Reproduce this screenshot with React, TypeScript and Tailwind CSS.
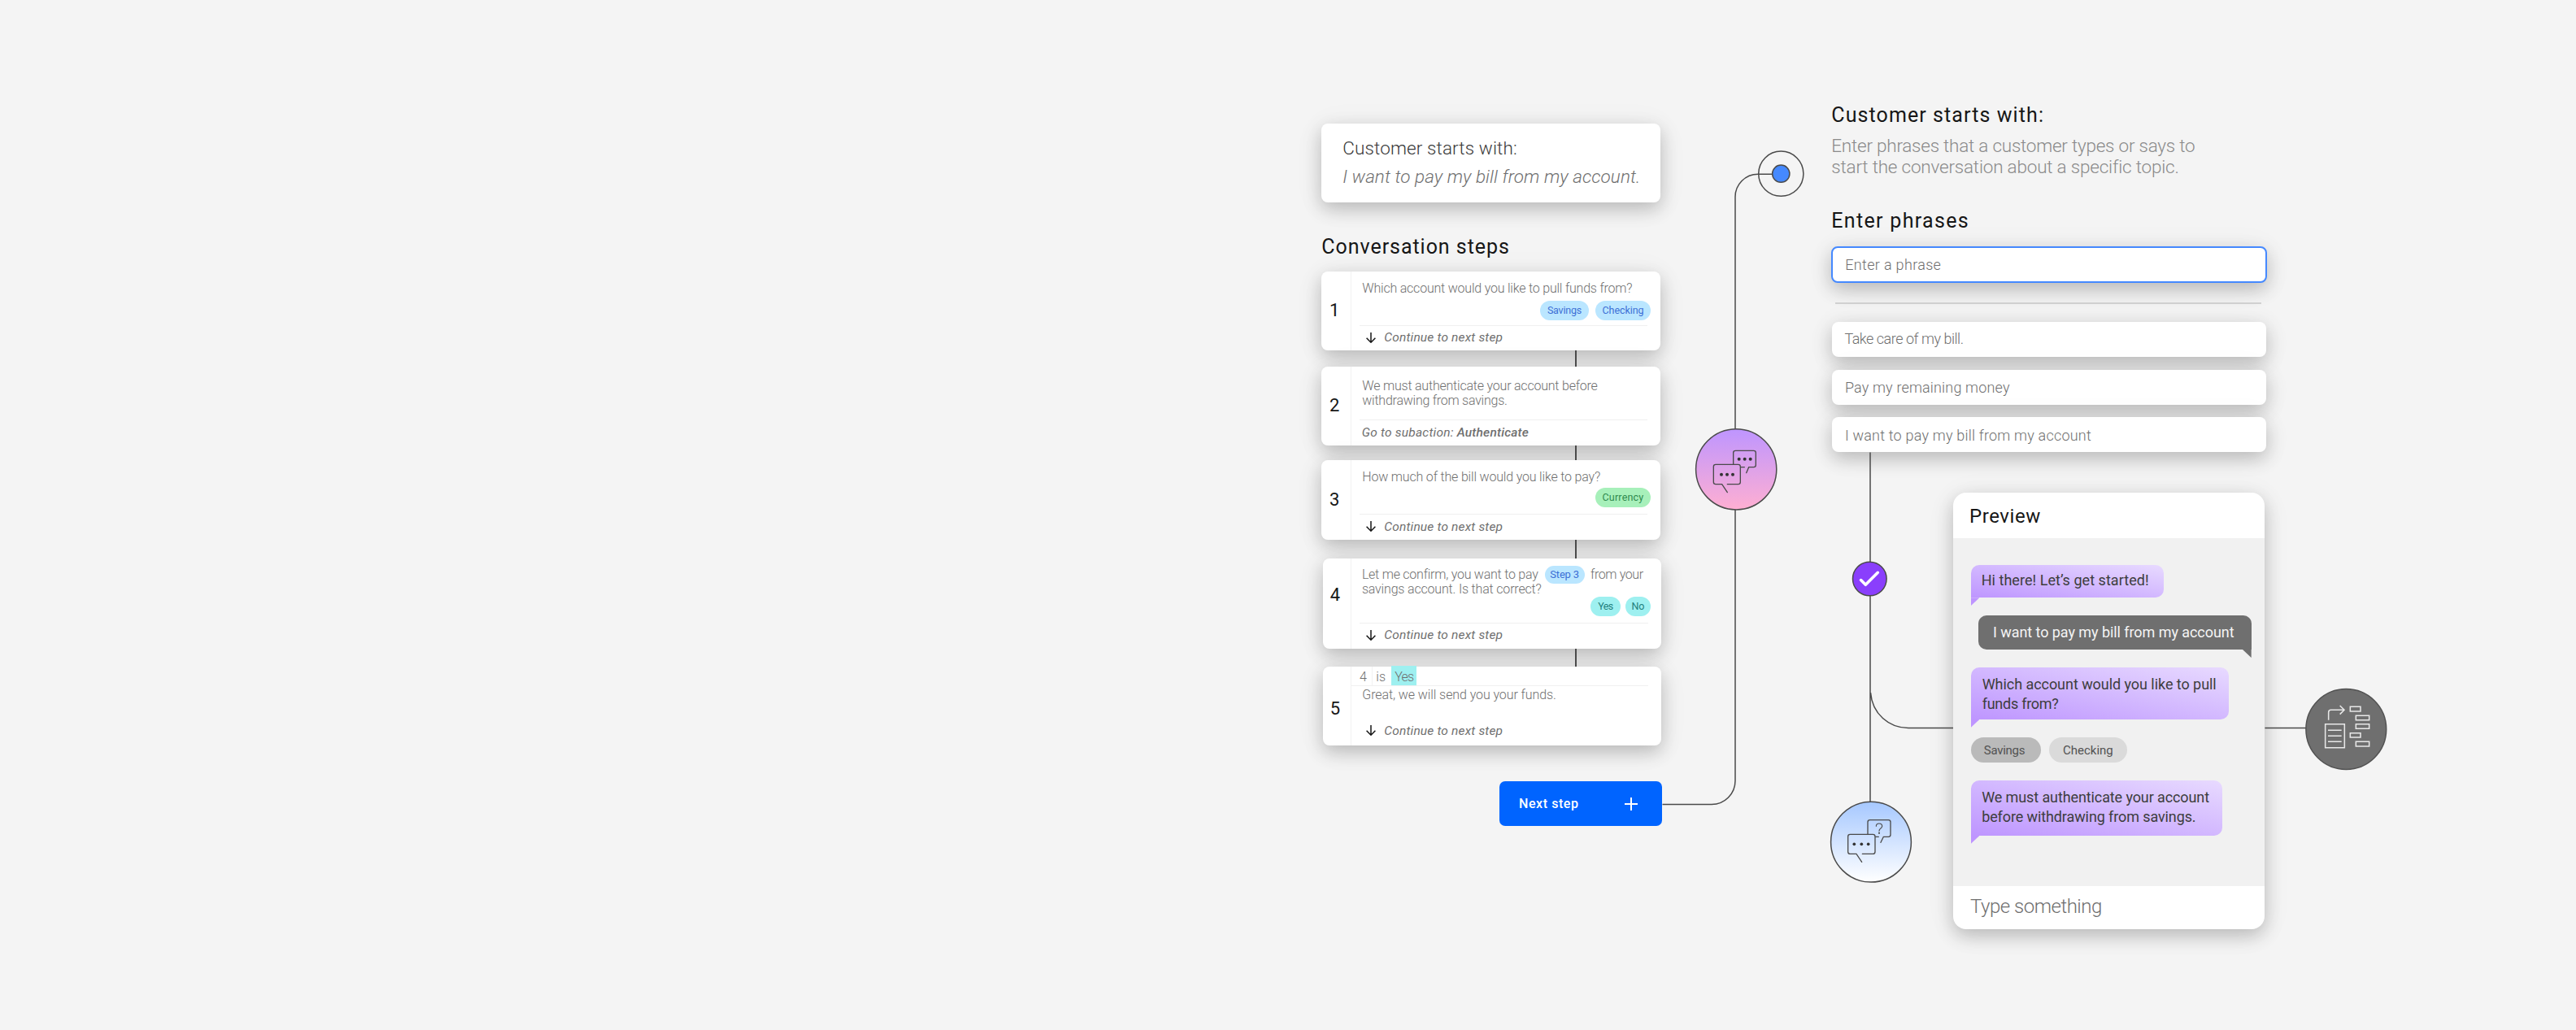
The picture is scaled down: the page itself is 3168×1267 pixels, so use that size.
import type { ReactNode } from "react";

const shadow = "shadow-[0_8px_22px_rgba(0,0,0,0.22),0_4px_40px_rgba(0,0,0,0.05)]";
const body = "text-[16px] leading-[18px] font-light text-[#6f6f6f]";
const input = "flex items-center rounded-lg bg-white text-[18px] font-light text-[#6f6f6f] ";

function T({ c = "", children }: { c?: string; children: string }) {
  return <span className={"whitespace-nowrap " + c}>{children}</span>;
}

function Pill({ w, c, t, children }: { w: string; c: string; t: string; children: string }) {
  return (
    <span className={"flex h-6 items-center justify-center rounded-full " + w + " " + c}>
      <T c={"leading-4 " + t}>{children}</T>
    </span>
  );
}

function Continue() {
  return (
    <div className="flex items-center">
      <svg className="ml-[8.5px] mr-[10px] h-[13px] w-[12px]" viewBox="0 0 12 13" fill="none" stroke="#161616" strokeWidth="1.5">
        <path d="M6 0V12M0.6 6.8L6 12.2L11.4 6.8" />
      </svg>
      <T c="text-[15.5px] leading-5 tracking-[0.172px] italic text-[#6f6f6f]">Continue to next step</T>
    </div>
  );
}

type StepProps = { n: number; h: string; np: string; top: string; children: ReactNode; footer: ReactNode; offset?: boolean };

function Step({ n, h, np, top, children, footer, offset }: StepProps) {
  return (
    <div className={"flex w-[416.7px] rounded-lg bg-white " + shadow + " " + h + (offset ? " ml-[1.3px]" : "")}>
      <div className={"flex shrink-0 justify-center border-r border-[#f2f2f2] pr-1 text-[22px] leading-6 text-[#161616] " + np + (offset ? " w-[35.7px]" : " w-[37px]")}>{n}</div>
      <div className="flex flex-1 flex-col">
        <div className={"flex flex-col " + top}>{children}</div>
        <div className="ml-[9.5px] mr-4 border-t border-[#f0f0f0] pt-[4.5px]">{footer}</div>
      </div>
    </div>
  );
}

function Link({ h }: { h: string }) {
  return <div className={"relative z-10 ml-[311.7px] w-[1.6px] bg-[#4a4a4a] " + h} />;
}

function Bubble({ c, children, dark }: { c: string; children: ReactNode; dark?: boolean }) {
  return (
    <div className={"relative flex flex-col items-start rounded-t-[10px] text-[18px] leading-[23.7px] " + (dark ? "rounded-bl-[10px] bg-[#6f6f6f] text-[#f4f4f4] " : "rounded-br-[10px] bg-linear-to-tr from-[#be95ff] to-[#e8daff] text-[#3d3d3d] ") + c}>
      {children}
      <div className={"absolute top-full h-[10px] w-[10.7px] " + (dark ? "right-0 bg-[#6f6f6f] [clip-path:polygon(0_0,100%_0,100%_100%)]" : "left-0 bg-[#be95ff] [clip-path:polygon(0_0,100%_0,0_100%)]")} />
    </div>
  );
}

function Steps() {
  return (
    <>
      <Step n={1} h="h-[97.5px]" np="pt-[36.5px]" top="h-[66px] pt-[12px]" footer={<Continue />}>
        <div className={"pl-[13px] tracking-[-0.209px] " + body}><T>Which account would you like to pull funds from?</T></div>
        <div className="mr-3 mt-[6px] flex justify-end gap-2 text-[#3d70d6]">
          <Pill w="w-[60px]" t="text-[12.5px] tracking-[-0.2px]" c="bg-[#bae6ff]">Savings</Pill>
          <Pill w="w-[68px]" t="text-[12.5px] tracking-[-0.07px]" c="bg-[#bae6ff]">Checking</Pill>
        </div>
      </Step>
      <Link h="h-[19.5px]" />
      <Step n={2} h="h-[97.5px]" np="pt-[35.7px]" top="h-[65.5px] pt-[15.3px]" footer={
        <div className="pl-[3px] text-[15.5px] leading-5 tracking-[0.21px] italic text-[#6f6f6f]"><T>Go to subaction:</T> <T c="font-medium">Authenticate</T></div>
      }>
        <div className={"flex flex-col items-start pl-[13px] " + body}>
          <T c="tracking-[-0.212px]">We must authenticate your account before</T>
          <T c="tracking-[-0.247px]">withdrawing from savings.</T>
        </div>
      </Step>
      <Link h="h-[17.8px]" />
      <Step n={3} h="h-[97.4px]" np="pt-[36.7px]" top="h-[66px] pt-[12px]" footer={<Continue />}>
        <div className={"pl-[13px] tracking-[-0.179px] " + body}><T>How much of the bill would you like to pay?</T></div>
        <div className="mr-3 mt-[3.5px] flex justify-end text-[#2f8a4e]">
          <Pill w="w-[68px]" t="text-[12.5px] tracking-[0.2px]" c="bg-[#a7f0ba]">Currency</Pill>
        </div>
      </Step>
      <Link h="h-[23.3px]" />
      <Step n={4} offset h="h-[111.3px]" np="pt-[33px]" top="h-[79px] pt-[10.6px]" footer={<Continue />}>
        <div className={"flex flex-col items-start pl-[12.6px] " + body}>
          <div className="flex h-[18px] items-center">
            <T c="tracking-[-0.237px]">Let me confirm, you want to pay</T>
            <span className="ml-2 mr-[7.5px] flex h-[22px] w-[49px] items-center justify-center rounded-full bg-[#bae6ff] font-normal text-[#3d70d6]"><T c="text-[13px] leading-4 tracking-[-0.218px]">Step 3</T></span>
            <T c="tracking-[-0.4px]">from your</T>
          </div>
          <T c="tracking-[-0.179px]">savings account. Is that correct?</T>
        </div>
        <div className="mr-[13.3px] flex justify-end gap-1.5 text-[#22807c]">
          <Pill w="w-[37px]" t="text-[12.5px] tracking-[-0.6px]" c="bg-[#9ef0f0]">Yes</Pill>
          <Pill w="w-[31px]" t="text-[12.5px]" c="bg-[#9ef0f0]">No</Pill>
        </div>
      </Step>
      <Link h="h-[21.4px]" />
      <div className={"ml-[1.3px] flex h-[97px] w-[416.7px] rounded-lg bg-white " + shadow}>
        <div className="flex w-[35.7px] shrink-0 justify-center border-r border-[#f2f2f2] pr-1 pt-[40px] text-[22px] leading-6 text-[#161616]">5</div>
        <div className="flex flex-1 flex-col">
          <div className="mr-4 flex h-6 items-center border-b border-[#f0f0f0] text-[16px] leading-5 font-light text-[#6f6f6f]">
            <span className="flex h-full w-[25.5px] items-center justify-end border-r border-[#f2f2f2] pr-[6px] pt-[3px]">4</span>
            <T c="ml-[4.5px] pt-[3px]">is</T>
            <span className="ml-[7px] flex h-6 w-[31.4px] items-center justify-center bg-[#9ef0f0] pt-[3px]"><T c="tracking-[-0.8px]">Yes</T></span>
          </div>
          <div className={"pl-[13px] pt-[2.5px] tracking-[-0.088px] " + body}><T>Great, we will send you your funds.</T></div>
          <div className="ml-[9.5px] mt-[24.7px]"><Continue /></div>
        </div>
      </div>
    </>
  );
}

function Preview() {
  return (
    <div className={"ml-[149.7px] mt-[49.7px] flex h-[537.3px] w-[383.4px] flex-col rounded-2xl bg-white " + shadow}>
      <div className="flex h-14 items-center pl-5 pt-0.5 text-[24px] tracking-[0.581px] text-[#161616]"><T>Preview</T></div>
      <div className="flex h-[428px] flex-col items-start bg-[#f1f1f1] pl-[21.7px] pt-[33px]">
        <Bubble c="h-[40.3px] w-[237.3px] pl-[13px] pt-[7.3px] tracking-[0.04px]"><T>Hi there! Let’s get started!</T></Bubble>
        <Bubble dark c="ml-[9.3px] mt-[21.7px] h-[42px] w-[335.7px] pl-[18px] pt-[9px] tracking-[-0.06px]"><T>I want to pay my bill from my account</T></Bubble>
        <Bubble c="mt-[22px] h-16 w-[317.3px] pl-[14px] pt-[9.3px]">
          <T c="tracking-[-0.051px]">Which account would you like to pull</T>
          <T c="tracking-[-0.256px]">funds from?</T>
        </Bubble>
        <div className="mt-[21.7px] flex gap-[9.7px] text-[15px] text-[#525252]">
          <span className="flex h-[31.7px] w-[86.7px] items-center justify-center rounded-full bg-[#bababa] pt-px pr-1"><T c="tracking-[-0.27px]">Savings</T></span>
          <span className="flex h-[31.7px] w-[95.7px] items-center justify-center rounded-full bg-[#dadada] pt-px"><T>Checking</T></span>
        </div>
        <Bubble c="mt-[21.6px] h-[68px] w-[309px] pl-[13.5px] pt-[9px]">
          <T c="tracking-[-0.104px]">We must authenticate your account</T>
          <T c="tracking-[-0.107px]">before withdrawing from savings.</T>
        </Bubble>
      </div>
      <div className="flex flex-1 items-center pb-1 pl-[21px] text-[24px] font-light tracking-[-0.483px] text-[#6f6f6f]"><T>Type something</T></div>
    </div>
  );
}

function Connectors() {
  return (
    <svg className="absolute inset-0 h-[1267px] w-[3168px]" viewBox="0 0 3168 1267" fill="none" stroke="#4a4a4a" strokeWidth="1.5">
      <defs>
        <linearGradient id="pink" x1="0" y1="0" x2="0" y2="1"><stop offset="0" stopColor="#be95ff" /><stop offset="1" stopColor="#ffafd2" /></linearGradient>
        <linearGradient id="blue" x1="0" y1="0" x2="0" y2="1"><stop offset="0" stopColor="#a6c8ff" /><stop offset="1" stopColor="#ffffff" /></linearGradient>
      </defs>
      <path d="M2044.5 989.5H2105A29 29 0 0 0 2134 960.5V242.5A28 28 0 0 1 2162 214.3H2180" />
      <circle cx="2190.3" cy="213.7" r="27.6" />
      <circle cx="2190.3" cy="213.7" r="10.6" fill="#4589ff" />
      <path d="M2300 556.5V986M2300.5 852C2302.5 878 2323 895.5 2347 895.5H2402M2785.4 895.5H2836" />
      <circle cx="2135.2" cy="577.3" r="49.6" fill="url(#pink)" />
      <circle cx="2299.3" cy="712" r="20.8" fill="#8a3ffc" />
      <path d="M2288.6 713.6L2294.3 719.3L2309.3 704.3" stroke="#fff" strokeWidth="3.6" strokeLinecap="round" strokeLinejoin="round" />
      <circle cx="2301" cy="1035.7" r="49.4" fill="url(#blue)" />
      <circle cx="2885.3" cy="897" r="49.4" fill="#6f6f6f" stroke="#525252" />

      <g transform="translate(2060 420) scale(0.33333)" strokeWidth="4" strokeLinecap="round">
        <path d="M215 453V411Q215 403 223 403H290Q298 403 298 411V456Q298 464 290 464H272L263 485M243 464H256" />
        <path d="M193 527H233Q241 527 241 519V462Q241 454 233 454H150Q142 454 142 462V519Q142 527 150 527H173L193 557" />
        <g fill="#333" stroke="none"><circle cx="236" cy="434" r="6" /><circle cx="257" cy="434" r="6" /><circle cx="278" cy="434" r="6" /><circle cx="171" cy="491" r="6" /><circle cx="192" cy="491" r="6" /><circle cx="213" cy="491" r="6" /></g>
      </g>
      <g transform="translate(2060 780) scale(0.33333)" strokeWidth="4" strokeLinecap="round">
        <path d="M711 738V694Q711 686 719 686H787Q795 686 795 694V740Q795 748 787 748H769L759 769M740 748H751" />
        <path d="M691 811H730Q738 811 738 803V747Q738 739 730 739H646Q638 739 638 747V803Q638 811 646 811H669L689 841" />
        <path d="M742 709Q742 699 753 699Q764 699 764 709Q764 714 758 718Q753 721 753 727" strokeWidth="3.4" />
        <g fill="#333" stroke="none"><circle cx="753" cy="734" r="3" /><circle cx="661" cy="775" r="5.5" /><circle cx="688" cy="775" r="5.5" /><circle cx="713" cy="775" r="5.5" /></g>
      </g>
      <g transform="translate(2780 810) scale(0.33333)" stroke="#e8e8e8" strokeWidth="4.6">
        <path d="M251 227V199Q251 190 260 190H309M293 174L309 190L293 206" />
        <path d="M239 242H310V329H239ZM249 265H299M249 286H299M249 307H299" />
        <path d="M331 178H369V195H331ZM352 211H401V227H352ZM352 242H401V259H352ZM331 275H369V291H331ZM352 307H401V324H352Z" />
      </g>
    </svg>
  );
}

export default function App() {
  return (
    <div className="relative flex h-[1267px] w-[3168px] overflow-hidden bg-[#f4f4f4] font-['Roboto',sans-serif]">
      <section className="ml-[1625.3px] mt-[152px] flex w-[627px] shrink-0 flex-col">
        <div className={"flex h-[97.3px] w-[416.7px] flex-col items-start gap-[5px] rounded-lg bg-white pl-[26px] pt-[15.4px] text-[22.5px] leading-[30px] font-light " + shadow}>
          <T c="tracking-[0.118px] text-[#393939]">Customer starts with:</T>
          <T c="tracking-[0.041px] italic text-[#6f6f6f]">I want to pay my bill from my account.</T>
        </div>
        <h2 className="mb-[14.3px] mt-[38.4px] h-8 text-[25px] leading-8 tracking-[0.958px] text-[#161616]"><T>Conversation steps</T></h2>
        <Steps />
        <button className="ml-[218.7px] mt-[44.6px] flex h-[54.7px] w-[200.3px] items-center justify-between rounded-[7px] bg-[#0064ff] pl-6 pr-[30px] font-medium text-white">
          <T c="text-[16px] tracking-[0.574px]">Next step</T>
          <svg className="size-4" viewBox="0 0 16 16" stroke="white" strokeWidth="2"><path d="M8 0V16M0 8H16" /></svg>
        </button>
      </section>

      <section className="mt-[125.7px] flex w-[536px] shrink-0 flex-col">
        <h2 className="h-8 text-[25px] leading-8 tracking-[1.087px] text-[#161616]"><T>Customer starts with:</T></h2>
        <p className="mt-[8px] flex flex-col items-start text-[22.5px] leading-[26.6px] font-light text-[#8a8a8a]">
          <T c="tracking-[-0.233px]">Enter phrases that a customer types or says to</T>
          <T c="tracking-[-0.204px]">start the conversation about a specific topic.</T>
        </p>
        <h2 className="mt-[36.8px] h-8 text-[25px] leading-8 tracking-[1.319px] text-[#161616]"><T>Enter phrases</T></h2>
        <div className={input + "mt-[15.3px] h-[45px] border-2 border-[#4589ff] pl-[15px] tracking-[0.325px] " + shadow}><T>Enter a phrase</T></div>
        <div className="ml-[5px] mt-6 h-0.5 w-[524px] bg-[#d0d0d0]" />
        <div className="ml-[1.1px] mt-[22px] flex w-[534px] flex-col gap-[15.7px]">
          <div className={input + "h-[43px] pb-px pl-[15px] tracking-[-0.472px] " + shadow}><T>Take care of my bill.</T></div>
          <div className={input + "h-[43px] pl-[15.5px] tracking-[0.163px] " + shadow}><T>Pay my remaining money</T></div>
          <div className={input + "h-[43px] pl-[15.5px] pt-px tracking-[0.202px] " + shadow}><T>I want to pay my bill from my account</T></div>
        </div>
        <Preview />
      </section>

      <Connectors />
    </div>
  );
}
